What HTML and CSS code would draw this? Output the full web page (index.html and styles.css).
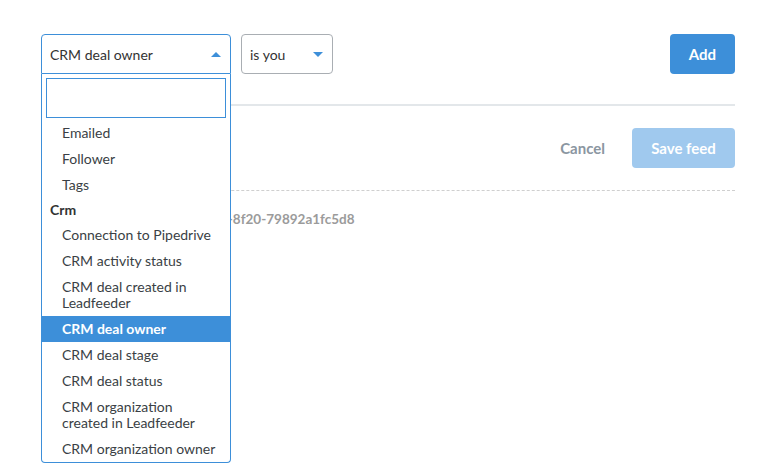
FILE: index.html
```html
<!DOCTYPE html>
<html>
<head>
<meta charset="utf-8">
<link rel="stylesheet" href="styles.css">
</head>
<body>
<div class="page">
  <div class="toolbar">
    <div class="field">
      <div class="select-box open">
        <span>CRM deal owner</span>
        <span class="caret up"></span>
      </div>
      <div class="dropdown">
        <input class="search" type="text">
        <ul class="options">
          <li class="opt">Emailed</li>
          <li class="opt">Follower</li>
          <li class="opt">Tags</li>
          <li class="group">Crm</li>
          <li class="opt">Connection to Pipedrive</li>
          <li class="opt">CRM activity status</li>
          <li class="opt">CRM deal created in Leadfeeder</li>
          <li class="opt active">CRM deal owner</li>
          <li class="opt">CRM deal stage</li>
          <li class="opt">CRM deal status</li>
          <li class="opt">CRM organization created in Leadfeeder</li>
          <li class="opt">CRM organization owner</li>
        </ul>
      </div>
    </div>
    <div class="select-box small">
      <span>is you</span>
      <span class="caret down"></span>
    </div>
    <button class="btn primary add">Add</button>
  </div>
  <div class="rule"></div>
  <div class="actions">
    <button class="btn link">Cancel</button>
    <button class="btn primary disabled">Save feed</button>
  </div>
  <div class="dashed"></div>
  <div class="feed-id">Feed ID: 5c3a1e2b-4d7f-4a9e-8f20-79892a1fc5d8</div>
</div>
</body>
</html>
```
FILE: styles.css
```css
* { box-sizing: border-box; }
html, body {
  min-height: 468px;
}
body {
  margin: 0;
  font-family: Lato, "Open Sans", sans-serif;
  font-size: 14px;
  color: #333;
  background: #fff;
}
.page {
  width: 694px;
  min-height: 468px;
  margin-left: 41px;
  padding-top: 34px;
}
.toolbar {
  display: flex;
  align-items: center;
  gap: 10px;
  height: 40px;
}
.field {
  position: relative;
  width: 190px;
  z-index: 5;
}
.select-box {
  height: 40px;
  border: 1px solid #a9aeb3;
  border-radius: 4px;
  padding: 0 8px;
  display: flex;
  align-items: center;
  justify-content: space-between;
  color: #333;
  background: #fff;
}
.select-box.open {
  border-color: #3d8fd9;
  border-radius: 4px 4px 0 0;
}
.select-box.small {
  width: 92px;
}
.caret {
  width: 0;
  height: 0;
  border-left: 5px solid transparent;
  border-right: 5px solid transparent;
  margin-right: 1px;
}
.caret.up { border-bottom: 5px solid #3d8fd9; }
.caret.down { border-top: 5px solid #3d8fd9; }
.dropdown {
  position: absolute;
  top: 40px;
  left: 0;
  width: 190px;
  height: 389px;
  background: #fff;
  border: 1px solid #3d8fd9;
  border-top: none;
  border-radius: 0 0 4px 4px;
  padding-top: 4px;
  z-index: 5;
}
.search {
  display: block;
  margin: 0 4px;
  width: 180px;
  height: 40px;
  border: 1px solid #3d8fd9;
  outline: none;
  font: inherit;
}
.options {
  list-style: none;
  margin: 2px 0 0;
  padding: 0;
}
.opt {
  padding: 5px 10px 5px 20px;
  line-height: 16px;
  color: #3a3f45;
}
.opt.active {
  background: #3d8fd9;
  color: #fff;
  font-weight: 700;
}
.group {
  padding: 4px 8px;
  line-height: 16px;
  font-weight: 700;
  font-size: 14px;
  color: #333;
}
.btn {
  height: 40px;
  border: none;
  border-radius: 4px;
  font-family: Lato, "Open Sans", sans-serif;
  font-size: 15px;
  font-weight: 700;
  cursor: pointer;
}
.btn.primary {
  background: #3d8fd9;
  color: #fff;
}
.btn.primary.disabled {
  background: #a0c9ee;
  width: 103px;
}
.btn.add {
  margin-left: auto;
  width: 65px;
}
.btn.link {
  background: none;
  color: #8b96a1;
  padding: 0;
}
.rule {
  margin-top: 30px;
  height: 2px;
  background: #e3e7ea;
}
.actions {
  margin-top: 22px;
  display: flex;
  justify-content: flex-end;
  align-items: center;
  gap: 27px;
}
.dashed {
  margin-top: 22px;
  border-top: 1px dashed #cfcfcf;
}
.feed-id {
  margin-top: 20px;
  line-height: 16px;
  color: #9b9b9b;
  font-size: 13.5px;
  font-weight: 700;
  padding-left: 6px;
}
```
